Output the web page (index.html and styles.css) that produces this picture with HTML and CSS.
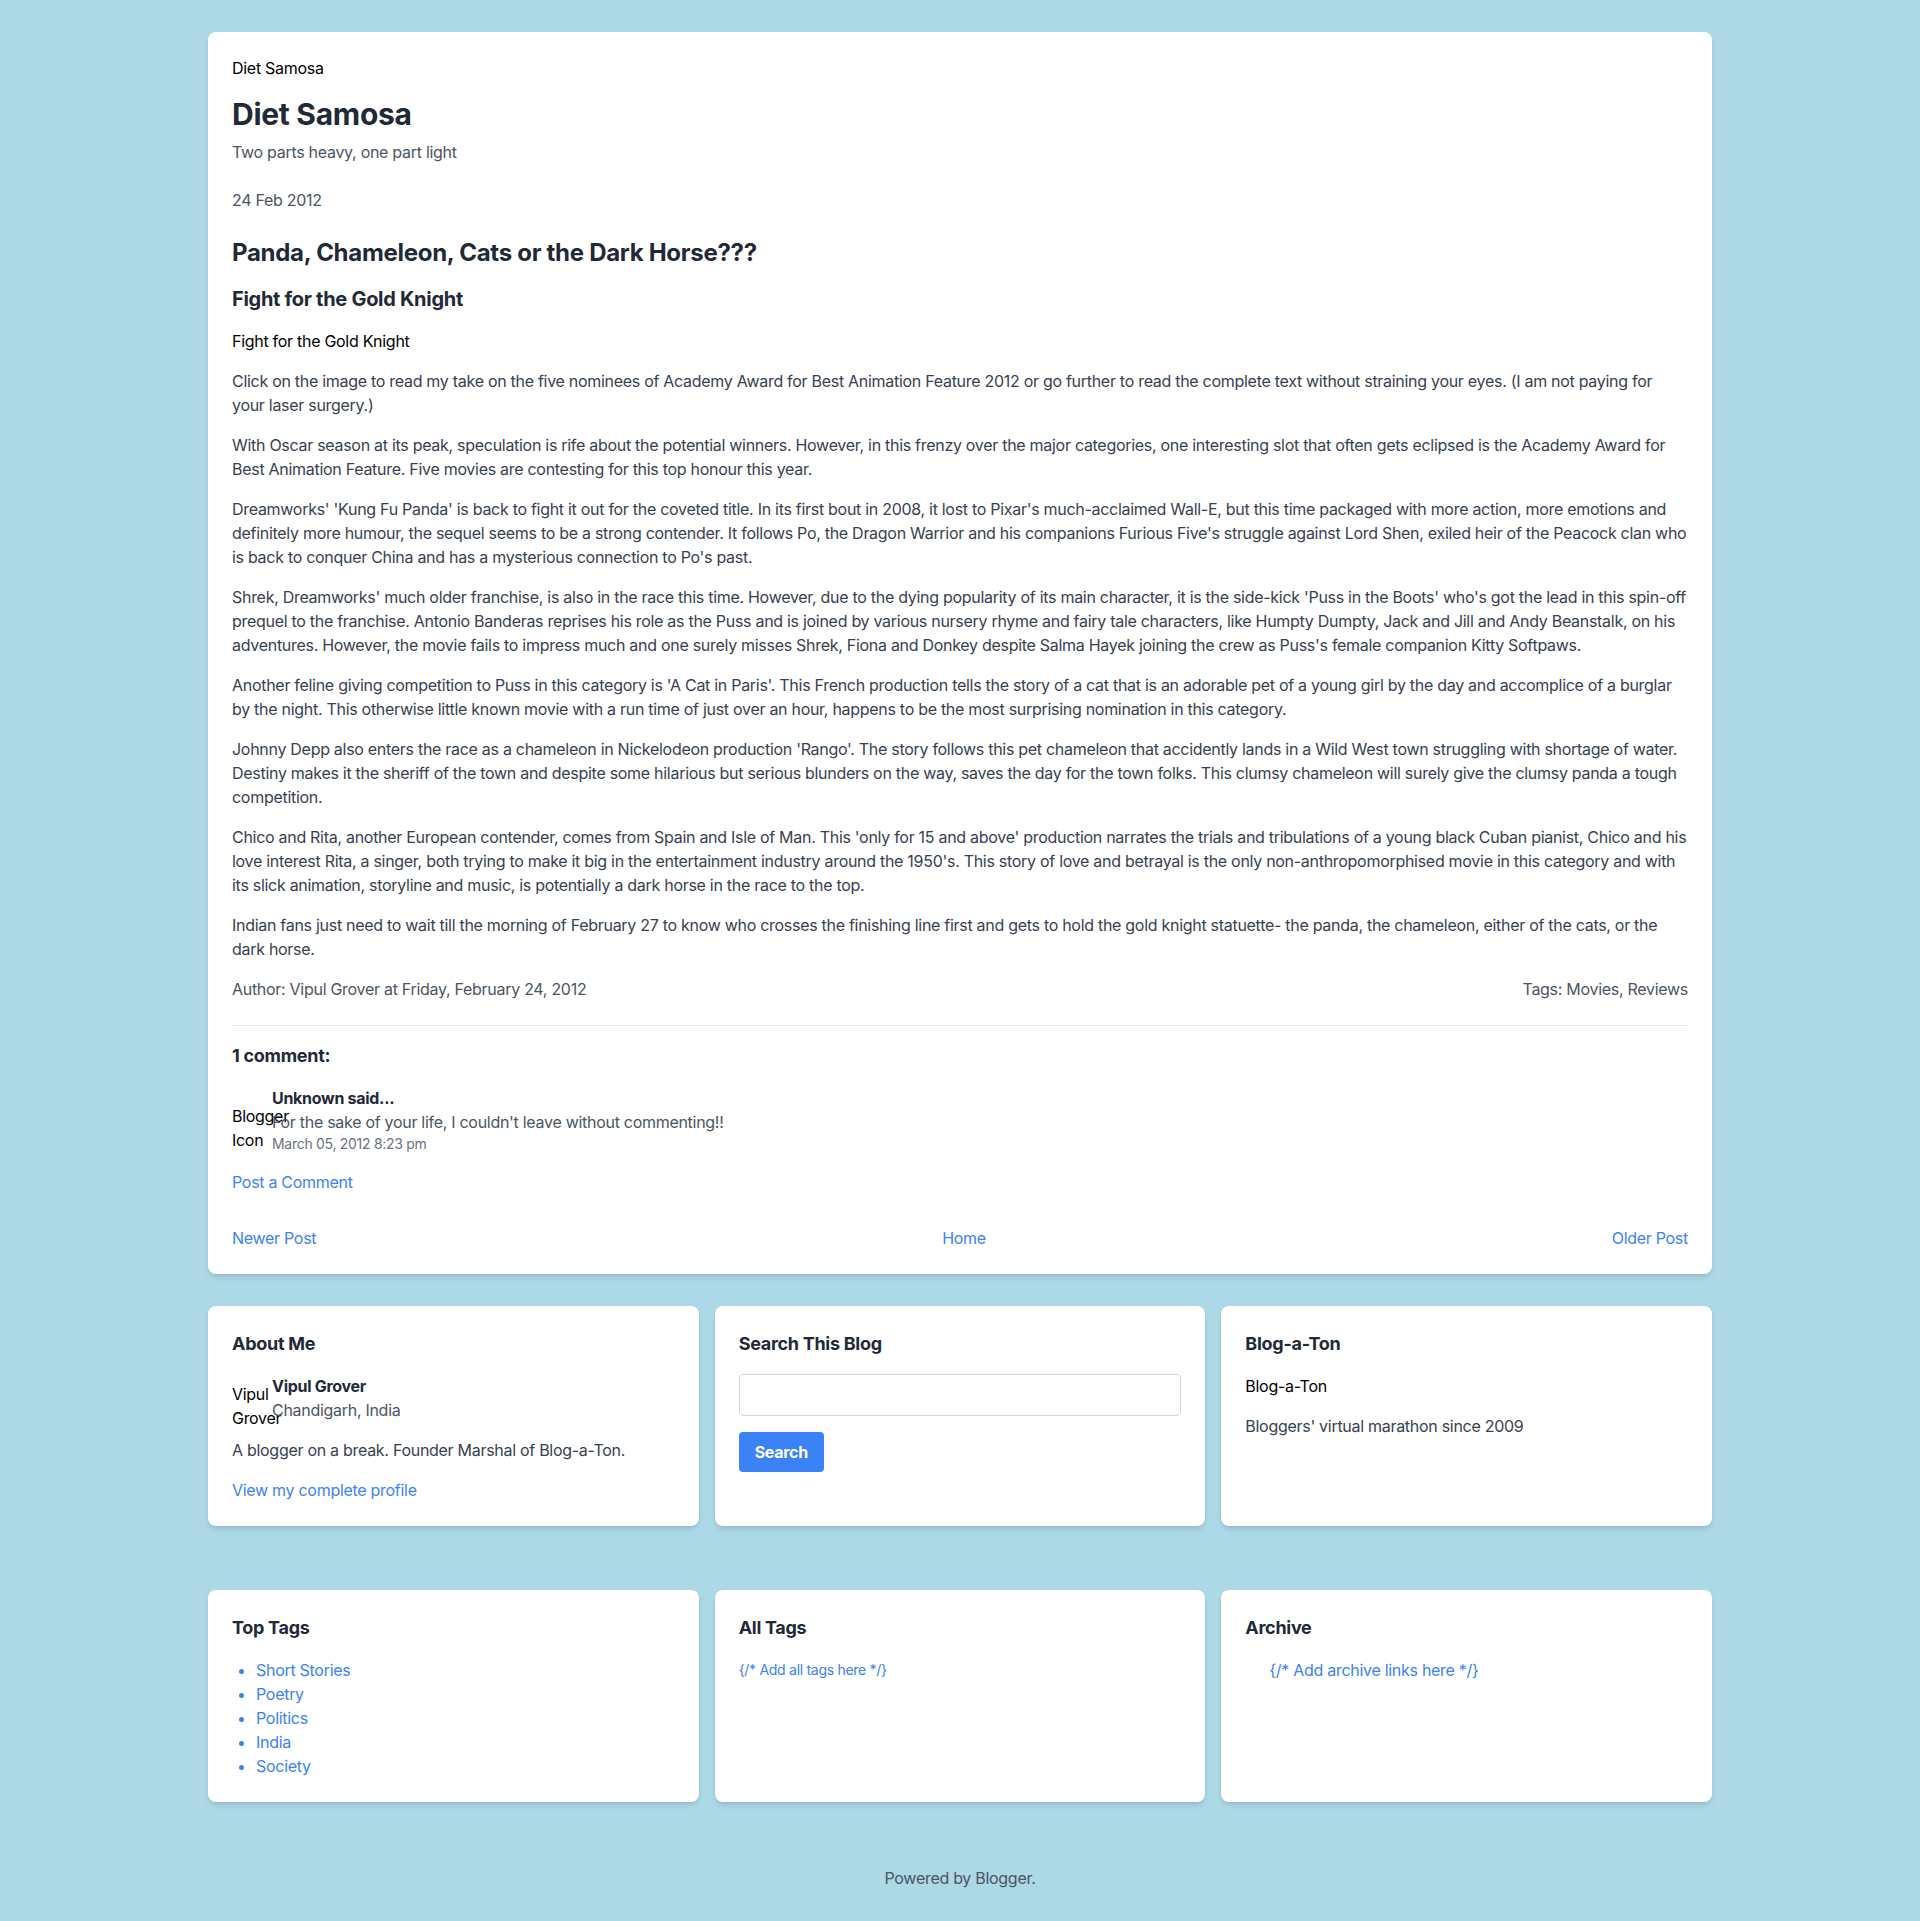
FILE: index.html
```html
<!DOCTYPE html>
<html lang="en">
<head>
<meta charset="utf-8">
<title>Diet Samosa: Panda, Chameleon, Cats or the Dark Horse???</title>
<link rel="stylesheet" href="styles.css">
</head>
<body>
<div class="container">
  <main class="card post-card">
    <div class="site-name">Diet Samosa</div>
    <h1 class="blog-title">Diet Samosa</h1>
    <p class="tagline">Two parts heavy, one part light</p>
    <div class="date">24 Feb 2012</div>
    <h2 class="post-title">Panda, Chameleon, Cats or the Dark Horse???</h2>
    <h3 class="post-sub">Fight for the Gold Knight</h3>
    <p class="plain">Fight for the Gold Knight</p>
    <div class="post-body">
      <p>Click on the image to read my take on the five nominees of Academy Award for Best Animation Feature 2012 or go further to read the complete text without straining your eyes. (I am not paying for your laser surgery.)</p>
      <p>With Oscar season at its peak, speculation is rife about the potential winners. However, in this frenzy over the major categories, one interesting slot that often gets eclipsed is the Academy Award for Best Animation Feature. Five movies are contesting for this top honour this year.</p>
      <p>Dreamworks' 'Kung Fu Panda' is back to fight it out for the coveted title. In its first bout in 2008, it lost to Pixar's much-acclaimed Wall-E, but this time packaged with more action, more emotions and definitely more humour, the sequel seems to be a strong contender. It follows Po, the Dragon Warrior and his companions Furious Five's struggle against Lord Shen, exiled heir of the Peacock clan who is back to conquer China and has a mysterious connection to Po's past.</p>
      <p>Shrek, Dreamworks' much older franchise, is also in the race this time. However, due to the dying popularity of its main character, it is the side-kick 'Puss in the Boots' who's got the lead in this spin-off prequel to the franchise. Antonio Banderas reprises his role as the Puss and is joined by various nursery rhyme and fairy tale characters, like Humpty Dumpty, Jack and Jill and Andy Beanstalk, on his adventures. However, the movie fails to impress much and one surely misses Shrek, Fiona and Donkey despite Salma Hayek joining the crew as Puss's female companion Kitty Softpaws.</p>
      <p>Another feline giving competition to Puss in this category is 'A Cat in Paris'. This French production tells the story of a cat that is an adorable pet of a young girl by the day and accomplice of a burglar by the night. This otherwise little known movie with a run time of just over an hour, happens to be the most surprising nomination in this category.</p>
      <p>Johnny Depp also enters the race as a chameleon in Nickelodeon production 'Rango'. The story follows this pet chameleon that accidently lands in a Wild West town struggling with shortage of water. Destiny makes it the sheriff of the town and despite some hilarious but serious blunders on the way, saves the day for the town folks. This clumsy chameleon will surely give the clumsy panda a tough competition.</p>
      <p>Chico and Rita, another European contender, comes from Spain and Isle of Man. This 'only for 15 and above' production narrates the trials and tribulations of a young black Cuban pianist, Chico and his love interest Rita, a singer, both trying to make it big in the entertainment industry around the 1950's. This story of love and betrayal is the only non-anthropomorphised movie in this category and with its slick animation, storyline and music, is potentially a dark horse in the race to the top.</p>
      <p>Indian fans just need to wait till the morning of February 27 to know who crosses the finishing line first and gets to hold the gold knight statuette- the panda, the chameleon, either of the cats, or the dark horse.</p>
    </div>
    <div class="post-meta">
      <span>Author: Vipul Grover at Friday, February 24, 2012</span>
      <span>Tags: Movies, Reviews</span>
    </div>
    <section class="comments">
      <h4 class="comments-title">1 comment:</h4>
      <div class="comment">
        <span class="avatar">Blogger Icon</span>
        <div class="comment-body">
          <div class="comment-author">Unknown said...</div>
          <div class="comment-text">For the sake of your life, I couldn't leave without commenting!!</div>
          <div class="comment-date">March 05, 2012 8:23 pm</div>
        </div>
      </div>
      <a class="link post-comment" href="#">Post a Comment</a>
    </section>
    <nav class="pager">
      <a class="link" href="#">Newer Post</a>
      <a class="link" href="#">Home</a>
      <a class="link" href="#">Older Post</a>
    </nav>
  </main>

  <div class="widgets">
    <div class="card widget">
      <h4 class="widget-title">About Me</h4>
      <div class="profile">
        <span class="avatar">Vipul Grover</span>
        <div>
          <div class="profile-name">Vipul Grover</div>
          <div class="profile-loc">Chandigarh, India</div>
        </div>
      </div>
      <p class="widget-text">A blogger on a break. Founder Marshal of Blog-a-Ton.</p>
      <a class="link" href="#">View my complete profile</a>
    </div>
    <div class="card widget">
      <h4 class="widget-title">Search This Blog</h4>
      <input class="search-input" type="text">
      <button class="search-btn">Search</button>
    </div>
    <div class="card widget">
      <h4 class="widget-title">Blog-a-Ton</h4>
      <div class="plain">Blog-a-Ton</div>
      <p class="widget-text bat">Bloggers' virtual marathon since 2009</p>
    </div>
  </div>

  <div class="widgets widgets-second">
    <div class="card widget">
      <h4 class="widget-title">Top Tags</h4>
      <ul class="tag-list">
        <li><a class="link" href="#">Short Stories</a></li>
        <li><a class="link" href="#">Poetry</a></li>
        <li><a class="link" href="#">Politics</a></li>
        <li><a class="link" href="#">India</a></li>
        <li><a class="link" href="#">Society</a></li>
      </ul>
    </div>
    <div class="card widget">
      <h4 class="widget-title">All Tags</h4>
      <div class="all-tags">{/* Add all tags here */}</div>
    </div>
    <div class="card widget">
      <h4 class="widget-title">Archive</h4>
      <div class="archive">{/* Add archive links here */}</div>
    </div>
  </div>

  <footer class="footer">Powered by Blogger.</footer>
</div>
</body>
</html>
```

FILE: styles.css
```css
* { box-sizing: border-box; }
html, body { margin: 0; padding: 0; }
body {
  background: #add8e6;
  font-family: Inter, "Liberation Sans", Arial, sans-serif;
  font-size: 16px;
  line-height: 24px;
  letter-spacing: -0.018em;
  color: #000;
}
h1, h2, h3, h4, p { margin: 0; }
a { text-decoration: none; }
.link { color: #3b82f6; }

.container {
  max-width: 1536px;
  margin: 0 auto;
  padding: 32px 16px 0;
}
.card {
  background: #fff;
  border-radius: 8px;
  box-shadow: 0 4px 6px -1px rgba(0,0,0,0.1), 0 2px 4px -2px rgba(0,0,0,0.1);
  padding: 24px;
}
.site-name { margin-bottom: 16px; }
.blog-title {
  font-size: 30px;
  line-height: 36px;
  font-weight: 700;
  color: #1f2937;
}
.tagline { margin-top: 8px; color: #4b5563; }
.date { margin-top: 24px; color: #4b5563; }
.post-title {
  margin-top: 25px;
  font-size: 24px;
  line-height: 32px;
  font-weight: 700;
  color: #1f2937;
}
.post-sub {
  margin-top: 16px;
  font-size: 20px;
  line-height: 28px;
  font-weight: 700;
  color: #1f2937;
}
.plain { margin-top: 16px; }
.post-body p { margin-top: 16px; color: #374151; }
.post-meta {
  margin-top: 16px;
  display: flex;
  justify-content: space-between;
  color: #4b5563;
}
.comments {
  margin-top: 24px;
  padding-top: 16px;
  border-top: 1px solid #e5e7eb;
}
.comments-title {
  font-size: 18px;
  line-height: 28px;
  font-weight: 700;
  color: #1f2937;
  margin-bottom: 16px;
}
.comment { display: flex; align-items: center; }
.avatar {
  display: block;
  flex: none;
  width: 32px;
  height: 32px;
  margin-right: 8px;
  color: #000;
  white-space: normal;
  word-break: keep-all;
}
.comment-author { font-weight: 700; color: #1f2937; }
.comment-text { color: #4b5563; }
.comment-date { font-size: 14px; line-height: 20px; color: #6b7280; }
.post-comment { display: inline-block; margin-top: 16px; }
.pager {
  margin-top: 32px;
  display: flex;
  justify-content: space-between;
}

.widgets {
  margin-top: 32px;
  display: grid;
  grid-template-columns: repeat(3, 1fr);
  gap: 16px;
}
.widgets-second { margin-top: 64px; }
.widget-title {
  font-size: 18px;
  line-height: 28px;
  font-weight: 700;
  color: #1f2937;
  margin-bottom: 16px;
}
.widget .plain { margin-top: 0; }
.profile { display: flex; align-items: center; margin-bottom: 16px; }
.profile-name { font-weight: 700; color: #1f2937; }
.profile-loc { color: #4b5563; }
.widget-text { color: #374151; margin-bottom: 16px; }
.widget-text.bat { margin-top: 16px; margin-bottom: 0; }
.search-input {
  display: block;
  width: 100%;
  height: 42px;
  border: 1px solid #d1d5db;
  border-radius: 4px;
  padding: 8px 12px;
  font: inherit;
}
.search-btn {
  margin-top: 16px;
  background: #3b82f6;
  color: #fff;
  border: 0;
  border-radius: 4px;
  padding: 8px 16px;
  font-family: inherit;
  font-size: 16px;
  line-height: 24px;
  font-weight: 700;
  letter-spacing: -0.018em;
}
.tag-list {
  margin: 0;
  padding-left: 24px;
  list-style: disc;
  color: #3b82f6;
}
.all-tags { font-size: 14px; line-height: 20px; color: #3b82f6; padding-top: 2px; }
.archive { padding-left: 24px; color: #3b82f6; }
.footer {
  margin-top: 32px;
  padding: 32px 0;
  text-align: center;
  color: #4b5563;
}
```
